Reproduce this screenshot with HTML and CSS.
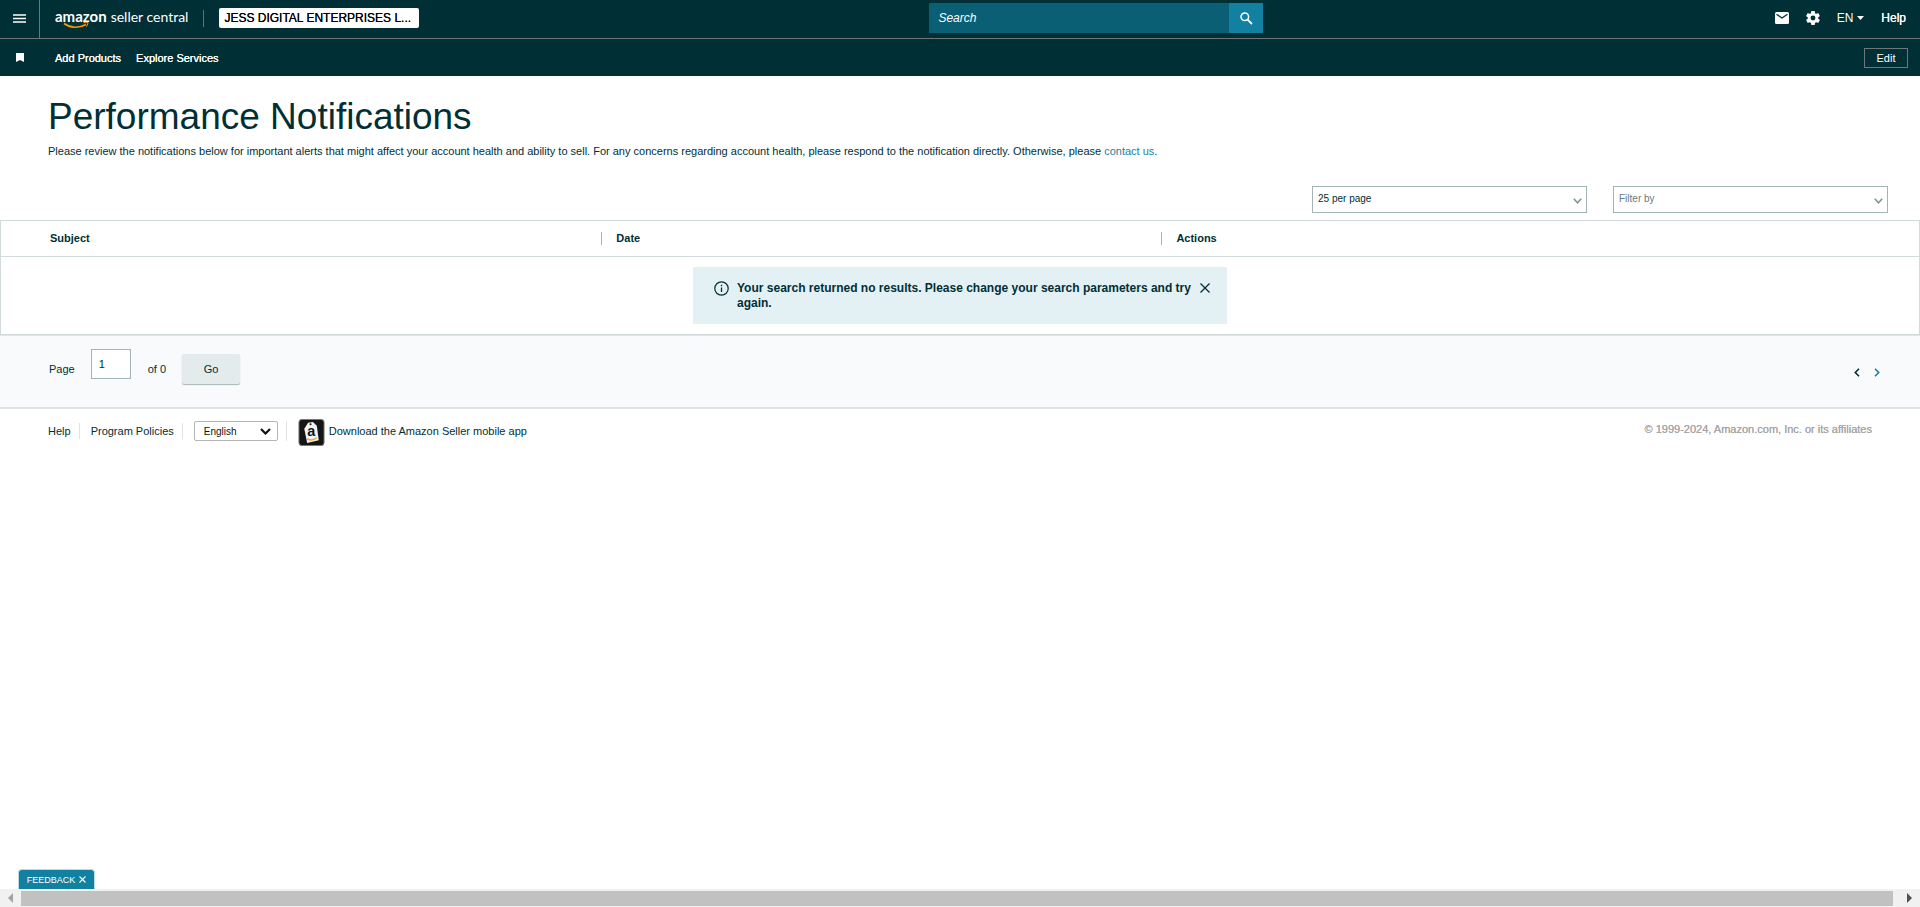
FILE: index.html
```
<!DOCTYPE html>
<html lang="en">
<head>
  <meta charset="UTF-8" />
  <meta name="viewport" content="width=device-width, initial-scale=1.0"/>
  <title>Performance Notifications</title>
  <link rel="stylesheet" href="styles.css">
</head>
<body>
  <header>
    <div class="top-bar">
      <button class="menu-btn" aria-label="Menu">
        <svg width="14" height="9" viewBox="0 0 14 9"><path d="M0 1h13M0 4.5h13M0 8h13" stroke="#fff" stroke-width="1.5"/></svg>
      </button>
      <a href="#" class="logo">
        <span class="logo-name">amazon</span>
        <span class="logo-sub">seller central</span>
        <svg class="smile" width="27" height="7" viewBox="0 0 27 7" fill="none" stroke="#f90"><path d="M1 1.5C7 6 16 6.500 23 2.500" stroke-width="1.600"/><path d="M20.500 .8c2-.6 4-.5 4.300 0 .3.700-.5 2.500-1.500 3.700" stroke-width="1.100"/></svg>
      </a>
      <button class="account">JESS DIGITAL ENTERPRISES L...</button>
      <form class="search">
        <input type="text" placeholder="Search" aria-label="Search">
        <button type="button" aria-label="Submit search">
          <svg width="13" height="13" viewBox="0 0 13 13" fill="none" stroke="#fff"><circle cx="4.800" cy="4.800" r="3.800" stroke-width="1.500"/><path d="M7.600 7.600L12 12" stroke-width="1.800"/></svg>
        </button>
      </form>
      <nav class="top-links">
        <a href="#" aria-label="Messages">
          <svg width="14" height="12" viewBox="0 0 14 12"><rect width="14" height="12" rx="1.500" fill="#fff"/><path d="M1.500 2.300L7 6l5.500-3.700" fill="none" stroke="#002f36" stroke-width="1.300"/></svg>
        </a>
        <a href="#" aria-label="Settings">
          <svg width="14" height="14" viewBox="2 2 20 20"><path fill="#fff" d="M19.430 12.980c.04-.32.07-.64.07-.98s-.03-.66-.07-.98l2.110-1.650c.19-.15.24-.42.12-.64l-2-3.460c-.12-.22-.39-.3-.61-.22l-2.490 1c-.52-.4-1.080-.73-1.690-.98l-.38-2.650C14.460 2.180 14.250 2 14 2h-4c-.25 0-.46.18-.49.42l-.38 2.650c-.61.25-1.170.59-1.690.98l-2.490-1c-.23-.09-.49 0-.61.22l-2 3.460c-.13.22-.07.49.12.64l2.110 1.650c-.04.32-.07.65-.07.98s.03.66.07.98l-2.110 1.650c-.19.15-.24.42-.12.64l2 3.460c.12.22.39.3.61.22l2.490-1c.52.4 1.080.73 1.690.98l.38 2.650c.03.24.24.42.49.42h4c.25 0 .46-.18.49-.42l.38-2.650c.61-.25 1.170-.59 1.690-.98l2.490 1c.23.09.49 0 .61-.22l2-3.460c.12-.22.07-.49-.12-.64l-2.110-1.650zM12 15.500a3.500 3.500 0 1 1 0-7 3.500 3.500 0 0 1 0 7z"/></svg>
        </a>
        <button class="lang">EN <svg width="7" height="4" viewBox="0 0 7 4"><path d="M0 0h7L3.500 4z" fill="#fff"/></svg></button>
        <a href="#">Help</a>
      </nav>
    </div>
    <div class="sub-bar">
      <svg class="bookmark" width="8" height="9" viewBox="0 0 8 9"><path d="M0 0h8v9L4 7 0 9z" fill="#fff"/></svg>
      <a href="#">Add Products</a>
      <a href="#">Explore Services</a>
      <button class="edit">Edit</button>
    </div>
  </header>

  <main>
    <div class="intro">
      <h1>Performance Notifications</h1>
      <p>Please review the notifications below for important alerts that might affect your account health and ability to sell. For any concerns regarding account health, please respond to the notification directly. Otherwise, please <a href="#">contact us</a>.</p>
    </div>

    <div class="filters">
      <div class="drop">
        <select aria-label="Results per page"><option>25 per page</option></select>
        <svg width="9" height="6" viewBox="0 0 9 6"><path d="M.8.8l3.700 4 3.700-4" fill="none" stroke="#7f9497" stroke-width="1.600"/></svg>
      </div>
      <div class="drop">
        <select class="muted" aria-label="Filter by"><option>Filter by</option></select>
        <svg width="9" height="6" viewBox="0 0 9 6"><path d="M.8.8l3.700 4 3.700-4" fill="none" stroke="#7f9497" stroke-width="1.600"/></svg>
      </div>
    </div>

    <table>
      <thead>
        <tr>
          <th class="col-subject">Subject</th>
          <th class="col-date"><span>Date</span></th>
          <th><span>Actions</span></th>
        </tr>
      </thead>
      <tbody>
        <tr>
          <td colspan="3">
            <div class="alert" role="status">
              <svg width="15" height="15" viewBox="0 0 15 15" fill="none" stroke="#002f36"><circle cx="7.500" cy="7.500" r="6.700" stroke-width="1.200"/><path d="M7.500 6.500v4.500M7.500 3.800v1.400" stroke-width="1.300"/></svg>
              <p>Your search returned no results. Please change your search parameters and try again.</p>
              <button aria-label="Close">
                <svg width="10" height="10" viewBox="0 0 10 10"><path d="M.5.5l9 9M9.500.5l-9 9" stroke="#002f36" stroke-width="1.300"/></svg>
              </button>
            </div>
          </td>
        </tr>
      </tbody>
    </table>

    <div class="pager">
      <label for="page">Page</label>
      <input type="text" id="page" value="1">
      <span class="total">of 0</span>
      <button class="go">Go</button>
      <div class="arrows">
        <button aria-label="Previous page"><svg width="6" height="9" viewBox="0 0 6 9"><path d="M5 .8L1.300 4.500 5 8.200" fill="none" stroke="#002f36" stroke-width="1.600"/></svg></button>
        <button aria-label="Next page"><svg width="6" height="9" viewBox="0 0 6 9"><path d="M1 .8l3.700 3.700L1 8.200" fill="none" stroke="#1a7f9f" stroke-width="1.600"/></svg></button>
      </div>
    </div>
  </main>

  <footer>
    <a href="#" class="foot-link">Help</a>
    <a href="#" class="foot-link">Program Policies</a>
    <div class="drop-lang">
      <select aria-label="Language"><option>English</option></select>
      <svg width="11" height="7" viewBox="0 0 11 7"><path d="M1 1l4.500 4.500L10 1" fill="none" stroke="#111" stroke-width="2.200"/></svg>
    </div>
    <a href="#" class="app">
      <svg width="27" height="27" viewBox="0 0 27 28">
        <rect x=".5" y=".5" width="26" height="27" rx="3" fill="#151515" stroke="#777"/>
        <path d="M6 10l4-6 5-1 4 4 2 15-12 3z" fill="#f3f3f3"/>
        <circle cx="12.500" cy="5.500" r="1.100" fill="#151515"/>
        <text x="9" y="18" class="tag-letter">a</text>
        <path d="M9 20.500c3 1.800 7 1.500 10-1" fill="none" stroke="#f5a623" stroke-width="1.500"/>
      </svg>
      Download the Amazon Seller mobile app
    </a>
    <span class="copyright">© 1999-2024, Amazon.com, Inc. or its affiliates</span>
  </footer>

  <button class="feedback">FEEDBACK <svg width="7" height="7" viewBox="0 0 7 7"><path d="M.5.5l6 6M6.500.5l-6 6" stroke="#fff" stroke-width="1.100"/></svg></button>

  <div class="scrollbar">
    <svg width="5" height="10" viewBox="0 0 5 10"><path d="M5 0v10L0 5z" fill="#a3a3a3"/></svg>
    <div class="thumb"></div>
    <svg width="5" height="10" viewBox="0 0 5 10"><path d="M0 0v10l5-5z" fill="#505050"/></svg>
  </div>
</body>
</html>
```
FILE: styles.css
```
* {
  box-sizing: border-box;
  margin: 0;
  padding: 0;
}

body {
  display: flex;
  flex-direction: column;
  min-height: 100vh;
  background: #fff;
  color: #002f36;
  font-family: "Liberation Sans", Arial, sans-serif;
  font-size: 11px;
}

a {
  color: inherit;
  text-decoration: none;
}

button,
input,
select {
  font: inherit;
  color: inherit;
  border: none;
  background: none;
}

button {
  cursor: pointer;
}

svg {
  display: block;
  flex-shrink: 0;
}

/* Header */
header {
  background: #002f36;
  color: #fff;
}

/* slightly heavier text than regular */
.account,
.top-links,
.sub-bar,
.copyright {
  text-shadow: 0 0 0 currentColor;
}

.top-bar {
  display: flex;
  align-items: center;
  height: 39px;
  padding-bottom: 2px;
  border-bottom: 1px solid #6c7778;
  font-size: 12px;
}

.menu-btn {
  display: flex;
  align-items: center;
  width: 40px;
  height: 38px;
  margin-bottom: -2px;
  padding: 0 0 2px 13px;
  border-right: 1px solid #6c7778;
}

.logo {
  display: flex;
  align-items: baseline;
  gap: 4px;
  position: relative;
  margin-left: 15px;
  padding: 0 15px 4px 0;
  border-right: 1px solid #55777c;
  font-family: Lato, sans-serif;
  line-height: 12px;
}

.logo-name {
  font-size: 15px;
  font-weight: bold;
}

.logo-sub {
  font-size: 14px;
}

.smile {
  position: absolute;
  left: 8px;
  bottom: -2px;
}

.account {
  width: 200px;
  height: 20px;
  margin-left: 15px;
  padding-left: 5px;
  border-radius: 2px;
  background: #fff;
  color: #000;
  text-align: left;
}

.search {
  display: flex;
  height: 30px;
  margin-left: auto;
}

.search input {
  width: 300px;
  padding-left: 9px;
  background: #0a5f75;
  font-style: italic;
}

.search input::placeholder {
  color: #fff;
}

.search button {
  display: flex;
  align-items: center;
  justify-content: center;
  width: 34px;
  background: #1280a0;
}

.top-links {
  display: flex;
  align-items: center;
  justify-content: flex-end;
  flex: 0 1 34.2%;
  gap: 17px;
  padding-right: 14px;
}

.lang {
  display: flex;
  align-items: center;
  gap: 4px;
}

.sub-bar {
  display: flex;
  align-items: center;
  gap: 15px;
  height: 37px;
  padding: 0 12px 0 16px;
}

.bookmark {
  margin-right: 16px;
}

.edit {
  width: 44px;
  height: 20px;
  margin-left: auto;
  border: 1px solid #6c7778;
}

/* Page heading */
.intro {
  padding: 19px 48px 0;
}

h1 {
  font-size: 37px;
  font-weight: normal;
  line-height: 44px;
}

.intro p {
  margin-top: 5px;
  line-height: 15px;
}

.intro p a {
  color: #1a7f9f;
}

.filters {
  display: flex;
  justify-content: flex-end;
  gap: 26px;
  padding: 27px 32px 7px;
}

.drop {
  display: flex;
  align-items: center;
  position: relative;
  width: 275px;
}

.drop select {
  appearance: none;
  width: 100%;
  height: 27px;
  padding: 0 0 2px 5px;
  border: 1px solid #a2b4b8;
  background: #fff;
  font-size: 10px;
}

.drop .muted {
  color: #6a7b7e;
}

.drop svg {
  position: absolute;
  right: 5px;
  top: 12px;
  pointer-events: none;
}

/* Notifications table */
table {
  width: 100%;
  border: 1px solid #d2dadc;
  border-spacing: 0;
}

th {
  height: 36px;
  border-bottom: 1px solid #d2dadc;
  text-align: left;
  line-height: 13px;
}

.col-subject {
  width: 31.3%;
  padding-left: 49px;
}

.col-date {
  width: 29.2%;
}

th span {
  display: block;
  padding-left: 14px;
  border-left: 1px solid #a2b4b8;
}

td {
  padding: 10px;
}

.alert {
  display: flex;
  align-items: flex-start;
  gap: 8px;
  width: 534px;
  height: 57px;
  margin: 0 auto;
  padding: 14px 17px 14px 21px;
  background: #e3f1f5;
  font-size: 12px;
  font-weight: bold;
  line-height: 15px;
}

.alert p {
  flex: 1;
}

.alert button {
  padding-top: 2px;
}

.pager {
  display: flex;
  align-items: flex-start;
  padding: 13px 40px 23px 49px;
  border-top: 1px solid #dfe4e6;
  border-bottom: 2px solid #dfe3e6;
  background: #f8fafc;
  line-height: 15px;
}

.pager label {
  padding-top: 13px;
}

.pager input {
  width: 40px;
  height: 30px;
  margin: 0 17px 0 16px;
  padding-left: 7px;
  border: 1px solid #a2b4b8;
  background: #fff;
}

.total {
  padding-top: 13px;
}

.go {
  width: 58px;
  height: 30px;
  margin: 5px 0 0 16px;
  border-radius: 2px;
  background: #e3ebed;
  box-shadow: 0 1px 1px #a9b4b6;
}

.arrows {
  display: flex;
  gap: 14px;
  margin-left: auto;
  padding-top: 19px;
}

/* Footer */
footer {
  display: flex;
  align-items: flex-start;
  padding: 10px 48px;
}

.foot-link {
  margin: 4px 11px 0 0;
  padding-right: 8px;
  border-right: 1px solid #dfe3e6;
  line-height: 16px;
}

.drop-lang {
  display: flex;
  align-items: center;
  position: relative;
  margin: 2px 11px 0 0;
  padding-right: 8px;
  border-right: 1px solid #dfe3e6;
}

.drop-lang select {
  appearance: none;
  width: 84px;
  height: 20px;
  padding-left: 9px;
  border: 1px solid #b5b5b5;
  border-radius: 2px;
  background: #fff;
  color: #111;
  font-size: 10px;
}

.drop-lang svg {
  position: absolute;
  right: 15px;
  pointer-events: none;
}

.app {
  display: flex;
  gap: 4px;
  line-height: 24px;
}

.tag-letter {
  font-size: 15px;
  font-weight: bold;
  fill: #151515;
}

.copyright {
  margin-left: auto;
  color: #a6a6a6;
  line-height: 20px;
}

.feedback {
  display: flex;
  align-items: center;
  justify-content: center;
  gap: 4px;
  width: 77px;
  height: 20px;
  margin: auto 0 0 18px;
  border: 1px solid #b9dbe4;
  border-bottom: none;
  border-radius: 4px 4px 0 0;
  background: #1280a0;
  color: #fff;
  font-size: 9px;
}

.scrollbar {
  display: flex;
  align-items: center;
  gap: 8px;
  height: 18px;
  padding: 0 8px;
  background: #f1f1f1;
}

.thumb {
  flex: 1;
  height: 15px;
  margin-right: 6px;
  background: #c1c1c1;
}
```
